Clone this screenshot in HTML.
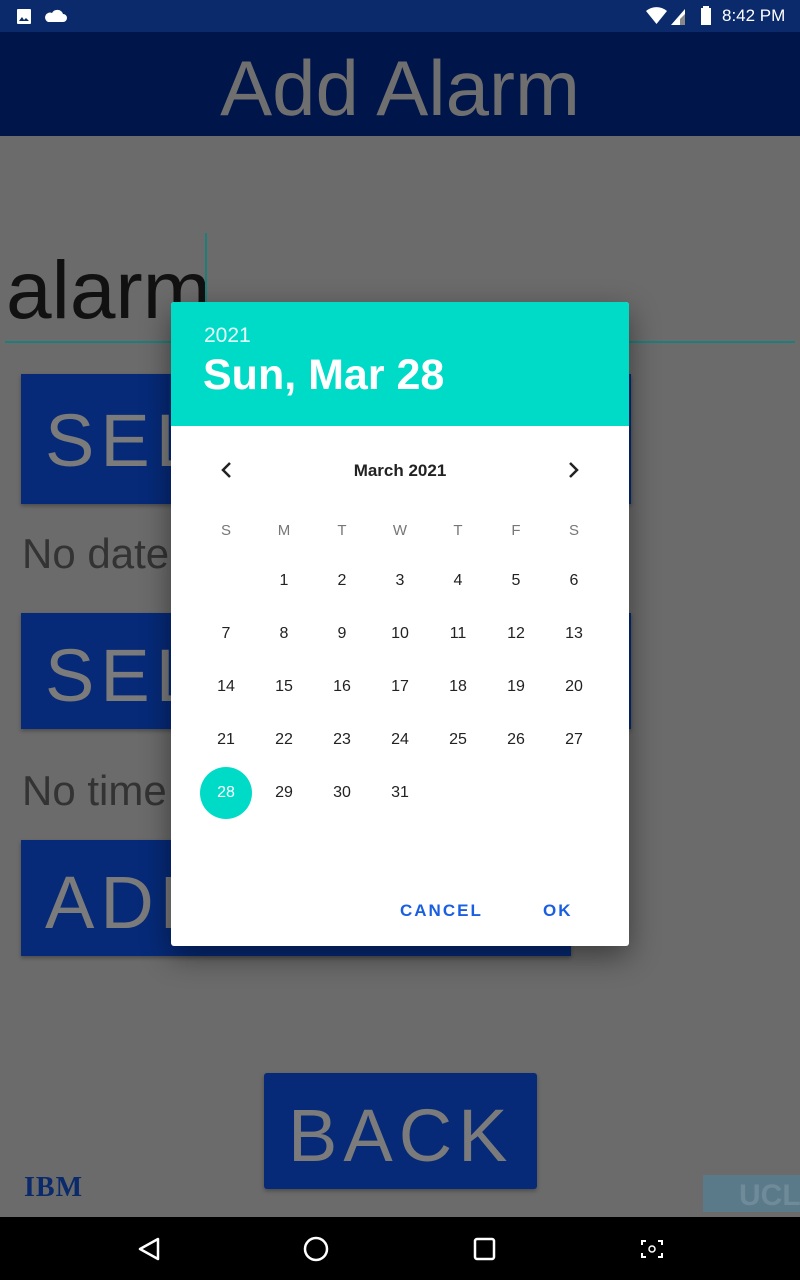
<!DOCTYPE html>
<html><head><meta charset="utf-8"><style>
*{margin:0;padding:0;box-sizing:border-box}
body{width:800px;height:1280px;position:relative;overflow:hidden;background:#6b6b6b;font-family:"Liberation Sans",Roboto,sans-serif}
.a{position:absolute}
.btn{position:absolute;background:#062a78;color:#7b7b7b;font-size:74px;letter-spacing:6px;line-height:1;overflow:hidden;white-space:nowrap;box-shadow:0 2px 4px rgba(0,0,0,.3)}
.lbl{position:absolute;color:#333;font-size:42px;white-space:nowrap}
.row{position:absolute;left:26px;display:flex}
.row span{width:58px;text-align:center;font-size:16px;color:#222;line-height:20px}
</style></head><body>
<div class="a" style="left:0;top:0;width:800px;height:32px;background:#0a2a6b"></div>
<svg class="a" style="left:16px;top:8px" width="16" height="16"><rect x="1" y="1" width="14" height="15" rx="1" fill="#fff"/><path d="M3 13l3-4 2 3 2-2 3 3z" fill="#0a2a6b"/></svg>
<svg class="a" style="left:44px;top:8px" width="24" height="16"><path d="M4 14h15a4 4 0 0 0 0-8 6 6 0 0 0-11-1 4.5 4.5 0 0 0-4 9z" fill="#fff"/></svg>
<svg class="a" style="left:645px;top:6px" width="70" height="20"><path d="M1 5a16 16 0 0 1 21 0l-10.5 13z" fill="#fff"/><path d="M26 19h14V3z" fill="#fff"/><path d="M35 19h5V8l-5 5z" fill="#888"/><rect x="56" y="2" width="10" height="17" fill="#fff"/><rect x="58" y="0" width="6" height="3" fill="#fff"/></svg>
<div class="a" style="left:722px;top:6px;color:#fff;font-size:17px">8:42 PM</div>
<div class="a" style="left:0;top:32px;width:800px;height:104px;background:#00154a"></div>
<div class="a" style="left:0;top:46px;width:800px;text-align:center;color:#6f6f6f;font-size:78px;line-height:84px">Add Alarm</div>
<div class="a" style="left:6px;top:250px;color:#111;font-size:82px;line-height:82px">alarm</div>
<div class="a" style="left:205px;top:233px;width:2px;height:70px;background:#1e7f7a"></div>
<div class="a" style="left:5px;top:341px;width:790px;height:2px;background:#1e7f7a"></div>
<div class="btn" style="left:21px;top:374px;width:610px;height:130px;padding:30px 0 0 24px">SELECT DATE</div>
<div class="lbl" style="left:22px;top:530px">No date selected</div>
<div class="btn" style="left:21px;top:613px;width:610px;height:116px;padding:26px 0 0 24px">SELECT TIME</div>
<div class="lbl" style="left:22px;top:767px">No time selected</div>
<div class="btn" style="left:21px;top:840px;width:550px;height:116px;padding:26px 0 0 24px">ADD ALARM</div>
<div class="btn" style="left:264px;top:1073px;width:273px;height:116px;padding:26px 0 0 24px;border-radius:3px">BACK</div>
<div class="a" style="left:24px;top:1172px;color:#0a2a6b;font-size:28px;font-weight:bold;font-family:'Liberation Serif',serif;letter-spacing:1px">IBM</div>
<div class="a" style="left:703px;top:1175px;width:97px;height:37px;background:#5a7a8a;color:#6f8a98;font-size:30px;font-weight:bold;padding:4px 0 0 36px">UCL</div>
<div class="a" style="left:0;top:1217px;width:800px;height:63px;background:#000"></div>
<svg class="a" style="left:0;top:1217px" width="800" height="63"><path d="M158 22v20l-18-10z" fill="none" stroke="#fff" stroke-width="2.5" stroke-linejoin="round"/><circle cx="316" cy="32" r="11" fill="none" stroke="#fff" stroke-width="2.5"/><rect x="475" y="22" width="19" height="20" rx="2" fill="none" stroke="#fff" stroke-width="2.5"/><path d="M642 28v-4h4M662 28v-4h-4M642 36v4h4M662 36v4h-4" fill="none" stroke="#fff" stroke-width="2"/><circle cx="652" cy="32" r="3" fill="none" stroke="#fff" stroke-width="1.5"/></svg>
<div class="a" style="left:171px;top:302px;width:458px;height:644px;background:#fff;border-radius:3px;box-shadow:0 10px 30px rgba(0,0,0,.45);overflow:hidden">
<div class="a" style="left:0;top:0;width:458px;height:124px;background:#00dbc8"></div>
<div class="a" style="left:33px;top:22px;color:#e6fffb;font-size:21px">2021</div>
<div class="a" style="left:32px;top:49px;color:#fff;font-size:43px;font-weight:bold">Sun, Mar 28</div>
<svg class="a" style="left:46px;top:158px" width="20" height="20"><path d="M13 3l-7 7 7 7" fill="none" stroke="#222" stroke-width="2.5"/></svg>
<svg class="a" style="left:392px;top:158px" width="20" height="20"><path d="M7 3l7 7-7 7" fill="none" stroke="#222" stroke-width="2.5"/></svg>
<div class="a" style="left:0;top:159px;width:458px;text-align:center;font-size:17px;font-weight:bold;color:#222">March 2021</div>
<div class="row" style="top:219px"><span style="color:#777;font-size:15px">S</span><span style="color:#777;font-size:15px">M</span><span style="color:#777;font-size:15px">T</span><span style="color:#777;font-size:15px">W</span><span style="color:#777;font-size:15px">T</span><span style="color:#777;font-size:15px">F</span><span style="color:#777;font-size:15px">S</span></div>
<div class="row" style="top:269px"><span></span><span>1</span><span>2</span><span>3</span><span>4</span><span>5</span><span>6</span></div>
<div class="row" style="top:322px"><span>7</span><span>8</span><span>9</span><span>10</span><span>11</span><span>12</span><span>13</span></div>
<div class="row" style="top:375px"><span>14</span><span>15</span><span>16</span><span>17</span><span>18</span><span>19</span><span>20</span></div>
<div class="row" style="top:428px"><span>21</span><span>22</span><span>23</span><span>24</span><span>25</span><span>26</span><span>27</span></div>
<div class="a" style="left:29px;top:465px;width:52px;height:52px;border-radius:50%;background:#00dbc8"></div>
<div class="row" style="top:481px"><span style="color:#fff">28</span><span>29</span><span>30</span><span>31</span></div>
<div class="a" style="left:229px;top:599px;color:#1a5fe0;font-size:17px;font-weight:bold;letter-spacing:2px">CANCEL</div>
<div class="a" style="left:372px;top:599px;color:#1a5fe0;font-size:17px;font-weight:bold;letter-spacing:2px">OK</div>
</div>
</body></html>
